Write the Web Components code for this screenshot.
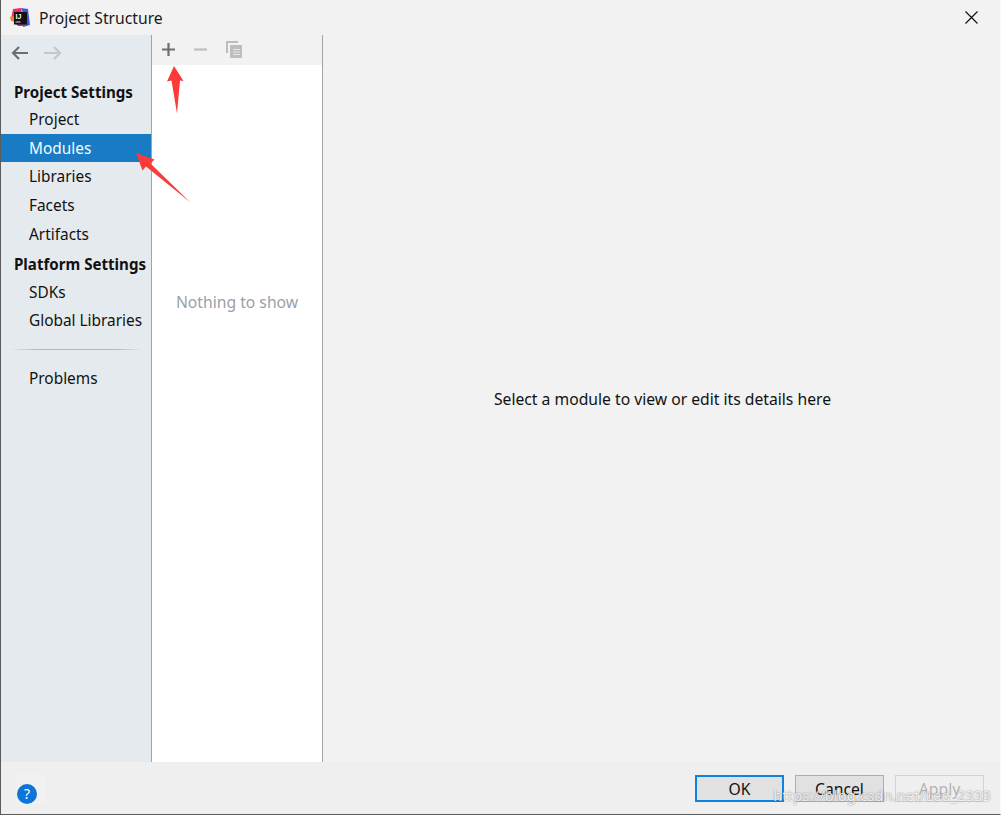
<!DOCTYPE html>
<html>
<head>
<meta charset="utf-8">
<title>Project Structure</title>
<style>
  body { margin: 0; background: #f2f2f2; font-family: "Noto Sans", "Open Sans", sans-serif; font-size: 15.7px; color: #111; }
</style>
</head>
<body>
<project-dialog>
  <dialog-title slot="title">Project Structure</dialog-title>
  <dialog-sidebar slot="sidebar">
    <nav-heading>Project Settings</nav-heading>
    <nav-item>Project</nav-item>
    <nav-item selected>Modules</nav-item>
    <nav-item>Libraries</nav-item>
    <nav-item>Facets</nav-item>
    <nav-item>Artifacts</nav-item>
    <nav-heading class="next">Platform Settings</nav-heading>
    <nav-item>SDKs</nav-item>
    <nav-item>Global Libraries</nav-item>
    <nav-divider></nav-divider>
    <nav-item>Problems</nav-item>
  </dialog-sidebar>
  <module-list slot="list">Nothing to show</module-list>
  <detail-pane slot="detail">Select a module to view or edit its details here</detail-pane>
  <dialog-footer slot="footer">
    <dialog-button primary>OK</dialog-button>
    <dialog-button>Cancel</dialog-button>
    <dialog-button disabled>Apply</dialog-button>
  </dialog-footer>
</project-dialog>

<script>
class projectDialog extends HTMLElement {
  constructor() {
    super();
    this.attachShadow({ mode: "open" });
    this.shadowRoot.innerHTML = `
      <style>
        :host {
          display: flex;
          flex-direction: column;
          position: relative;
          box-sizing: border-box;
          width: 1001px;
          height: 815px;
          overflow: hidden;
          background: #f2f2f2;
          border-left: 1px solid #5c5c5c;
          border-right: 1px solid #fafafa;
          border-bottom: 1px solid #5c5c5c;
        }
        .body {
          flex: 1;
          min-height: 0;
          display: grid;
          grid-template-columns: 151px 171px 1fr;
        }
        svg {
          position: absolute;
          left: -1px;
          top: 0;
          pointer-events: none;
        }
      </style>
      <slot name="title"></slot>
      <div class="body">
        <slot name="sidebar"></slot>
        <slot name="list"></slot>
        <slot name="detail"></slot>
      </div>
      <slot name="footer"></slot>
      <svg width="1001" height="815" viewBox="0 0 1001 815">
        <path d="M174 66 L183.5 81 L180 80.5 L177 113.5 L171.5 80.5 L167 81.5 Z" fill="#fb3a3a"/>
        <path d="M136 153 L154.5 159.5 L150.5 163.5 L190.5 202.5 L146 166.5 L142.5 170.5 Z" fill="#fb3a3a"/>
      </svg>
    `;
  }
}

class dialogTitle extends HTMLElement {
  constructor() {
    super();
    this.attachShadow({ mode: "open" });
    this.shadowRoot.innerHTML = `
      <style>
        :host {
          display: flex;
          align-items: center;
          height: 35px;
          flex: none;
          padding: 0 22px 0 9px;
          background: #f2f2f2;
          color: #1a1a1a;
        }
        .logo { margin-right: 9px; }
        .label { flex: 1; }
      </style>
      <svg class="logo" width="20" height="20" viewBox="0 0 20 20">
        <path d="M3 1 L11 0 L12 5 L5 13 L1 11 Z" fill="#ee2a6b"/>
        <path d="M11 0 L18 1 L20 17 L13 19 L13 5 Z" fill="#3d5bd9"/>
        <path d="M0 9 L5 8 L5 14 L1 13 Z" fill="#f58220"/>
        <path d="M4 14 L8 18 L15 18 L14 14 Z" fill="#c81fa0"/>
        <rect x="4" y="4" width="13" height="12.5" fill="#111"/>
        <text x="5.6" y="11" font-family="Liberation Sans" font-weight="700" font-size="7" fill="#fff">IJ</text>
        <rect x="5.5" y="13.5" width="5" height="1" fill="#ddd"/>
      </svg>
      <span class="label"><slot></slot></span>
      <svg width="13" height="13" viewBox="0 0 13 13">
        <path d="M0.5 0.5 L12.5 12.5 M12.5 0.5 L0.5 12.5" stroke="#111" stroke-width="1.2" fill="none"/>
      </svg>
    `;
  }
}

class dialogSidebar extends HTMLElement {
  constructor() {
    super();
    this.attachShadow({ mode: "open" });
    this.shadowRoot.innerHTML = `
      <style>
        :host {
          display: block;
          background: #e5eaee;
          border-right: 1px solid #a3a3a3;
        }
        .nav {
          display: flex;
          gap: 16px;
          align-items: center;
          height: 36px;
          padding-left: 10px;
          margin-bottom: 7.5px;
        }
        ::slotted(.next) { margin: 2.5px 0 0.5px; }
      </style>
      <div class="nav">
        <svg width="17" height="14" viewBox="0 0 17 14">
          <path d="M17 7 H2 M8 1 L2 7 L8 13" stroke="#6e6e6e" stroke-width="2.2" fill="none"/>
        </svg>
        <svg width="18" height="14" viewBox="0 0 18 14">
          <path d="M0 7 H16 M10 1 L16 7 L10 13" stroke="#c6c6c6" stroke-width="2.2" fill="none"/>
        </svg>
      </div>
      <slot></slot>
    `;
  }
}

class navHeading extends HTMLElement {
  constructor() {
    super();
    this.attachShadow({ mode: "open" });
    this.shadowRoot.innerHTML = `
      <style>
        :host {
          display: flex;
          align-items: center;
          height: 26.5px;
          padding-left: 13px;
          font-size: 15.1px;
          font-weight: 700;
          white-space: nowrap;
          color: #111;
        }
      </style>
      <slot></slot>
    `;
  }
}

class navItem extends HTMLElement {
  constructor() {
    super();
    this.attachShadow({ mode: "open" });
    this.shadowRoot.innerHTML = `
      <style>
        :host {
          display: flex;
          align-items: center;
          height: 28.7px;
          padding-left: 28px;
          font-size: 15.4px;
          white-space: nowrap;
          color: #111;
        }
        :host([selected]) {
          background: #1a7bc5;
          color: #f4fbff;
        }
      </style>
      <slot></slot>
    `;
  }
}

class navDivider extends HTMLElement {
  constructor() {
    super();
    this.attachShadow({ mode: "open" });
    this.shadowRoot.innerHTML = `
      <style>
        :host {
          display: block;
          height: 1px;
          margin: 14px 8px 14px 9px;
          background: linear-gradient(90deg, #e5eaee, #b4b8bb 20%, #b4b8bb 80%, #e5eaee);
        }
      </style>
    `;
  }
}

class moduleList extends HTMLElement {
  constructor() {
    super();
    this.attachShadow({ mode: "open" });
    this.shadowRoot.innerHTML = `
      <style>
        :host {
          display: flex;
          flex-direction: column;
          background: #fff;
          border-right: 1px solid #a3a3a3;
        }
        .bar {
          display: flex;
          align-items: center;
          gap: 19px;
          height: 30px;
          padding: 0 0 1px 10px;
          box-sizing: border-box;
          background: #f2f2f2;
        }
        .empty {
          padding-top: 226px;
          text-align: center;
          color: #9a9fa6;
        }
      </style>
      <div class="bar">
        <svg width="13" height="13" viewBox="0 0 13 13">
          <path d="M6.5 0 V13 M0 6.5 H13" stroke="#6e6e6e" stroke-width="2.2" fill="none"/>
        </svg>
        <svg width="13" height="13" viewBox="0 0 13 13">
          <path d="M0 6.5 H13" stroke="#bdbdbd" stroke-width="2.2" fill="none"/>
        </svg>
        <svg width="17" height="17" viewBox="0 0 17 17">
          <path d="M1 12 V1 H12" stroke="#bdbdbd" stroke-width="2" fill="none"/>
          <rect x="4" y="4" width="12" height="13" fill="#bdbdbd"/>
          <path d="M7 8.5 H14 M7 11 H14 M7 13.5 H14" stroke="#e8e8e8" stroke-width="1"/>
        </svg>
      </div>
      <div class="empty"><slot></slot></div>
    `;
  }
}

class detailPane extends HTMLElement {
  constructor() {
    super();
    this.attachShadow({ mode: "open" });
    this.shadowRoot.innerHTML = `
      <style>
        :host {
          display: flex;
          align-items: center;
          justify-content: center;
          padding-left: 2px;
          background: #f2f2f2;
          color: #111;
        }
      </style>
      <slot></slot>
    `;
  }
}

class dialogFooter extends HTMLElement {
  constructor() {
    super();
    this.attachShadow({ mode: "open" });
    this.shadowRoot.innerHTML = `
      <style>
        :host {
          display: flex;
          align-items: center;
          position: relative;
          flex: none;
          height: 52px;
          box-sizing: border-box;
          padding: 1px 16px 0 15px;
          background: #efefef;
        }
        .help {
          display: flex;
          align-items: flex-end;
          width: 29px;
          height: 27px;
          padding: 3px 0 0 1px;
          background: #f1f1f1;
          margin-right: auto;
        }
        .buttons {
          display: flex;
          gap: 11px;
        }
        .mark {
          position: absolute;
          right: 9px;
          bottom: 9px;
          font-size: 14.5px;
          letter-spacing: 0.2px;
          color: rgba(255,255,255,.85);
          text-shadow: 0 0 1.5px rgba(80,80,80,.8);
          white-space: nowrap;
        }
      </style>
      <div class="help">
        <svg width="20" height="20" viewBox="0 0 20 20">
          <circle cx="10" cy="10" r="10" fill="#0f74d8"/>
          <text x="10" y="15" text-anchor="middle" font-family="Noto Sans" font-size="14" fill="#fff">?</text>
        </svg>
      </div>
      <div class="buttons"><slot></slot></div>
      <span class="mark">https://blog.csdn.net/Leo_2333</span>
    `;
  }
}

class dialogButton extends HTMLElement {
  constructor() {
    super();
    this.attachShadow({ mode: "open" });
    this.shadowRoot.innerHTML = `
      <style>
        :host {
          display: flex;
          align-items: center;
          justify-content: center;
          box-sizing: border-box;
          width: 89px;
          height: 27px;
          background: #e1e1e1;
          border: 1px solid #adadad;
          color: #111;
        }
        :host([primary]) {
          border: 2px solid #0f82e0;
        }
        :host([disabled]) {
          background: #efefef;
          border-color: #d2d2d2;
          color: #b4b4b4;
        }
      </style>
      <slot></slot>
    `;
  }
}

customElements.define("project-dialog", projectDialog);
customElements.define("dialog-title", dialogTitle);
customElements.define("dialog-sidebar", dialogSidebar);
customElements.define("nav-heading", navHeading);
customElements.define("nav-item", navItem);
customElements.define("nav-divider", navDivider);
customElements.define("module-list", moduleList);
customElements.define("detail-pane", detailPane);
customElements.define("dialog-footer", dialogFooter);
customElements.define("dialog-button", dialogButton);
</script>
</body>
</html>
